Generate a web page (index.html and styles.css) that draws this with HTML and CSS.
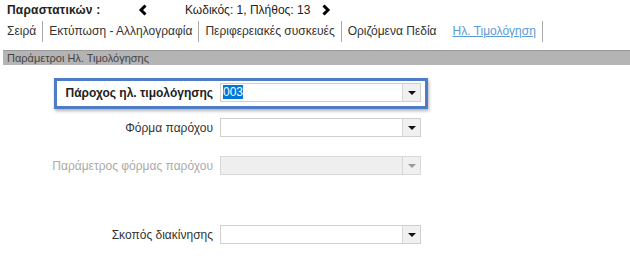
FILE: index.html
```html
<!DOCTYPE html>
<html lang="el">
<head>
    <meta charset="UTF-8">
    <title>Παράμετροι Ηλ. Τιμολόγησης</title>
    <link rel="stylesheet" href="styles.css">
</head>
<body>
    <div class="topbar">
        <span class="doc-title">Παραστατικών :</span>
        <span class="nav-btn prev">
            <svg width="10" height="12" viewBox="0 0 10 12"><polyline points="7.5,1.5 3,6 7.5,10.5" fill="none" stroke="#000" stroke-width="3"/></svg>
        </span>
        <span class="counter">Κωδικός: 1, Πλήθος: 13</span>
        <span class="nav-btn next">
            <svg width="10" height="12" viewBox="0 0 10 12"><polyline points="2.5,1.5 7,6 2.5,10.5" fill="none" stroke="#000" stroke-width="3"/></svg>
        </span>
    </div>
    <nav class="tabs">
        <a class="tab">Σειρά</a>
        <a class="tab">Εκτύπωση - Αλληλογραφία</a>
        <a class="tab">Περιφερειακές συσκευές</a>
        <a class="tab plain">Οριζόμενα Πεδία</a>
        <a class="tab active">Ηλ. Τιμολόγηση</a>
    </nav>
    <div class="band">Παράμετροι Ηλ. Τιμολόγησης</div>
    <div class="form">
        <div class="row focus">
            <label class="lbl">Πάροχος ηλ. τιμολόγησης</label>
            <div class="combo"><span class="val"><span class="sel">003</span></span><span class="btn"><i class="arrow"></i></span></div>
        </div>
        <div class="row r2">
            <label class="lbl">Φόρμα παρόχου</label>
            <div class="combo"><span class="val"></span><span class="btn"><i class="arrow"></i></span></div>
        </div>
        <div class="row r3 disabled">
            <label class="lbl">Παράμετρος φόρμας παρόχου</label>
            <div class="combo"><span class="val"></span><span class="btn"><i class="arrow"></i></span></div>
        </div>
        <div class="row r4">
            <label class="lbl">Σκοπός διακίνησης</label>
            <div class="combo"><span class="val"></span><span class="btn"><i class="arrow"></i></span></div>
        </div>
    </div>
</body>
</html>
```

FILE: styles.css
```css
body {
    margin: 0;
    font-family: "Liberation Sans", Arial, sans-serif;
    font-size: 12px;
    color: #222;
    background: #fff;
}
.topbar {
    display: flex;
    align-items: center;
    height: 20px;
    padding-left: 7px;
}
.doc-title {
    font-weight: bold;
    width: 131px;
    letter-spacing: 0.2px;
}
.nav-btn {
    display: flex;
    width: 10px;
    height: 12px;
}
.counter {
    margin-left: 37px;
    width: 136px;
    color: #222;
}
.tabs {
    display: flex;
    align-items: center;
    height: 22px;
    padding-left: 7px;
}
.tab {
    color: #333;
    padding-right: 6px;
    margin-right: 6px;
    border-right: 1px solid #aaa;
    line-height: 21px;
}
.tab.plain {
    border-right: none;
    margin-right: 10px;
}
.tab.active {
    color: #5b9bd5;
    text-decoration: underline;
}
.band {
    margin: 8px 0 0 3px;
    height: 14px;
    line-height: 14px;
    background: #b4b4b4;
    border-top: 1px solid #999;
    padding-left: 4px;
    font-size: 11px;
    color: #444;
}
.form {
    padding-top: 13px;
}
.row {
    display: flex;
    align-items: center;
}
.lbl {
    width: 213px;
    text-align: right;
    margin-right: 7px;
    color: #333;
}
.row.focus {
    width: 368px;
    margin-left: 54px;
    border: 3px solid #4f7cc6;
    padding: 2px 0 4px;
    box-shadow: 1px 2px 3px rgba(0, 0, 0, 0.3);
}
.row.focus .lbl {
    width: 156px;
    font-weight: bold;
    color: #222;
}
.row.r2 {
    margin-top: 9px;
}
.row.r3 {
    margin-top: 19px;
}
.row.r4 {
    margin-top: 50px;
}
.combo {
    display: flex;
    width: 199px;
    height: 17px;
    border: 1px solid #cfcfcf;
    background: #fff;
}
.val {
    flex: 1;
    padding-left: 2px;
    line-height: 17px;
}
.sel {
    background: #0078d7;
    color: #fff;
}
.btn {
    width: 17px;
    border-left: 1px solid #d6d6d6;
    background: #f0f0f0;
    display: flex;
    align-items: center;
    justify-content: center;
}
.arrow {
    width: 0;
    height: 0;
    border-left: 4px solid transparent;
    border-right: 4px solid transparent;
    border-top: 4px solid #111;
}
.disabled .lbl {
    color: #aaa;
}
.disabled .combo {
    background: #efefef;
    border-color: #d8d8d8;
}
.disabled .arrow {
    border-top-color: #999;
}
```
